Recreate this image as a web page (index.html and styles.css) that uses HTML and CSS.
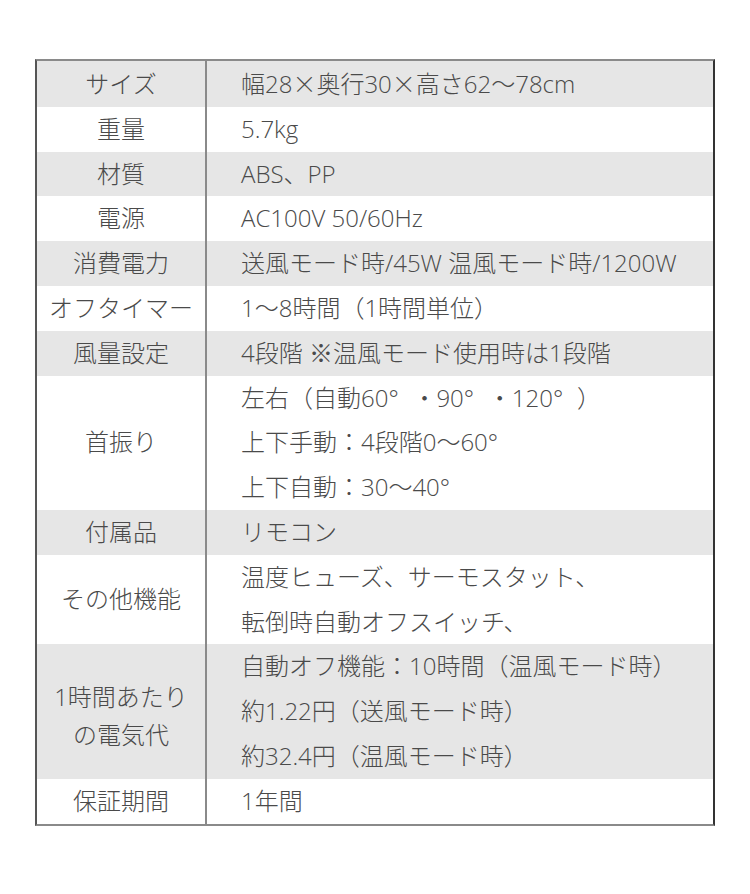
FILE: index.html
```html
<!DOCTYPE html>
<html lang="ja">
<head>
<meta charset="utf-8">
<link rel="stylesheet" href="styles.css">
</head>
<body>
<div class="page">
  <div class="spec">
    <div class="row gray"><div class="label">サイズ</div><div class="value">幅28<span class="cjk">×</span>奥行30<span class="cjk">×</span>高さ62〜78cm</div></div>
    <div class="row"><div class="label">重量</div><div class="value">5.7kg</div></div>
    <div class="row gray"><div class="label">材質</div><div class="value">ABS、PP</div></div>
    <div class="row"><div class="label">電源</div><div class="value">AC100V 50/60Hz</div></div>
    <div class="row gray"><div class="label">消費電力</div><div class="value">送風モード時/45W 温風モード時/1200W</div></div>
    <div class="row"><div class="label">オフタイマー</div><div class="value">1〜8時間（1時間単位）</div></div>
    <div class="row gray"><div class="label">風量設定</div><div class="value">4段階 ※温風モード使用時は1段階</div></div>
    <div class="row"><div class="label">首振り</div><div class="value"><p>左右（自動60<span class="deg">°</span>・90<span class="deg">°</span>・120<span class="deg">°</span>）</p><p>上下手動：4段階0〜60<span class="deg">°</span></p><p>上下自動：30〜40<span class="deg">°</span></p></div></div>
    <div class="row gray"><div class="label">付属品</div><div class="value">リモコン</div></div>
    <div class="row"><div class="label">その他機能</div><div class="value"><p>温度ヒューズ、サーモスタット、</p><p>転倒時自動オフスイッチ、</p></div></div>
    <div class="row gray"><div class="label tight">1時間あたり<br>の電気代</div><div class="value"><p>自動オフ機能：10時間（温風モード時）</p><p>約1.22円（送風モード時）</p><p>約32.4円（温風モード時）</p></div></div>
    <div class="row"><div class="label">保証期間</div><div class="value">1年間</div></div>
  </div>
</div>
</body>
</html>
```
FILE: styles.css
```css
html, body {
  margin: 0;
  padding: 0;
  background: #ffffff;
}
.page {
  padding-top: 59px;
  display: flex;
  justify-content: center;
}
.spec {
  width: 680px;
  box-sizing: border-box;
  border-top: 2px solid #8a8a8a;
  border-bottom: 2px solid #8a8a8a;
  border-left: 2px solid #555555;
  border-right: 2px solid #333333;
  font-family: "Open Sans", "Noto Sans CJK JP", sans-serif;
  font-weight: 300;
  font-size: 24px;
  color: #4a4a4a;
}
.row {
  display: grid;
  grid-template-columns: 168px 1fr;
  background: #ffffff;
}
.row.gray {
  background: #e6e6e6;
}
.label {
  display: flex;
  align-items: center;
  justify-content: center;
  text-align: center;
  line-height: 44.8px;
}
.label.tight {
  line-height: 38px;
  padding-top: 8px;
}
.value {
  border-left: 2px solid #8a8a8a;
  padding-left: 34px;
  line-height: 44.8px;
  white-space: nowrap;
}
.value p {
  margin: 0;
}
.cjk {
  font-family: "Noto Sans CJK JP", sans-serif;
}
.deg {
  display: inline-block;
  width: 1em;
}
```
